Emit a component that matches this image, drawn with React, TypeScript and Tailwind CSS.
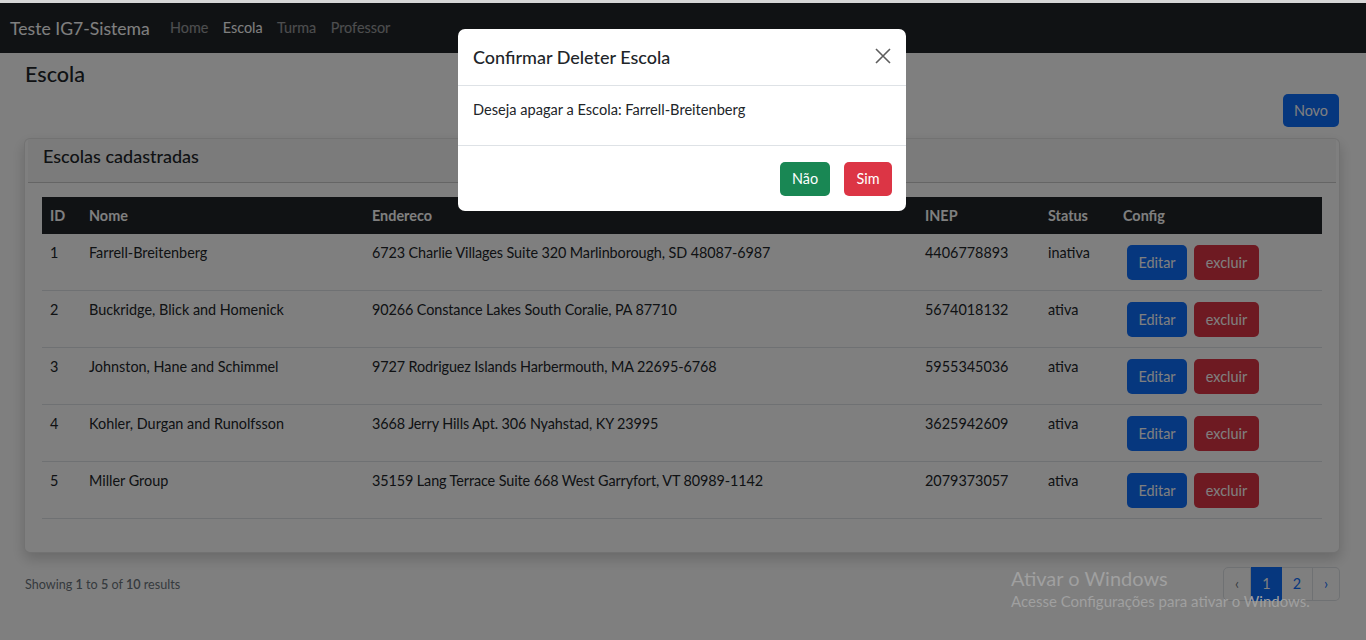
import React from "react";

const rows = [
  { id: 1, nome: "Farrell-Breitenberg", end: "6723 Charlie Villages Suite 320 Marlinborough, SD 48087-6987", inep: "4406778893", status: "inativa" },
  { id: 2, nome: "Buckridge, Blick and Homenick", end: "90266 Constance Lakes South Coralie, PA 87710", inep: "5674018132", status: "ativa" },
  { id: 3, nome: "Johnston, Hane and Schimmel", end: "9727 Rodriguez Islands Harbermouth, MA 22695-6768", inep: "5955345036", status: "ativa" },
  { id: 4, nome: "Kohler, Durgan and Runolfsson", end: "3668 Jerry Hills Apt. 306 Nyahstad, KY 23995", inep: "3625942609", status: "ativa" },
  { id: 5, nome: "Miller Group", end: "35159 Lang Terrace Suite 668 West Garryfort, VT 80989-1142", inep: "2079373057", status: "ativa" },
];

export default function App() {
  return (
    <div className="w-[1366px] h-[640px] overflow-hidden bg-white font-['Lato','Noto_Sans',sans-serif] text-[#212529]">
      <div className="h-[3px] bg-[#d6d6d6]" />
      <div className="relative h-[637px]">
        {/* Navbar */}
        <nav className="h-[50px] bg-[#212529] flex items-center px-[10px]">
          <span className="text-[17.6px] text-white mr-[13px] leading-[27px]">Teste IG7-Sistema</span>
          <a className="px-[7.2px] text-[14.4px] text-white/55">Home</a>
          <a className="px-[7.2px] text-[14.4px] text-white">Escola</a>
          <a className="px-[7.2px] text-[14.4px] text-white/55">Turma</a>
          <a className="px-[7.2px] text-[14.4px] text-white/55">Professor</a>
        </nav>

        {/* Main */}
        <main className="pl-[24px] pr-[26px]">
          <h3 className="mt-[8px] pl-px text-[21.6px] leading-[26px] font-medium">Escola</h3>
          <div className="mt-[7px] flex justify-end">
            <button className="mr-px h-[33px] px-[11px] rounded-[5px] bg-[#0d6efd] text-white text-[14.4px] leading-[21px]">Novo</button>
          </div>

          <div className="mt-[11px] rounded-[6px] bg-white shadow-[0_6px_14px_rgba(0,0,0,0.18)] border border-black/10">
            <div className="mx-[3px] border-b border-black/[0.175] bg-black/[0.03] pl-[15px] pt-[7px] pb-[7px]">
              <h5 className="text-[18px] leading-[21.6px] font-medium mb-[7px]">Escolas cadastradas</h5>
            </div>
            <div className="px-[17px] pt-[14px] pb-[33px]">
              <table className="w-full table-fixed border-collapse text-[14.4px] leading-[21px]">
                <thead>
                  <tr className="bg-[#212529] text-white">
                    <th className="w-[39px] px-2 py-2 text-left font-bold">ID</th>
                    <th className="w-[283px] px-2 py-2 text-left font-bold">Nome</th>
                    <th className="w-[553px] px-2 py-2 text-left font-bold">Endereco</th>
                    <th className="w-[123px] px-2 py-2 text-left font-bold">INEP</th>
                    <th className="w-[75px] px-2 py-2 text-left font-bold">Status</th>
                    <th className="w-[207px] px-2 py-2 text-left font-bold">Config</th>
                  </tr>
                </thead>
                <tbody>
                  {rows.map((r) => (
                    <tr key={r.id} className="border-b border-[#dee2e6] align-top">
                      <td className="px-2 pt-2 pb-[7px]">{r.id}</td>
                      <td className="px-2 pt-2 pb-[7px]">{r.nome}</td>
                      <td className="px-2 pt-2 pb-[7px] tracking-[-0.1px]">{r.end}</td>
                      <td className="px-2 pt-2 pb-[7px]">{r.inep}</td>
                      <td className="px-2 pt-2 pb-[7px]">{r.status}</td>
                      <td className="px-2 pt-2 pb-[7px]">
                        <div className="flex gap-[7px] ml-[4px] my-[3px]">
                          <button className="h-[35px] w-[60px] rounded-[5px] bg-[#0d6efd] text-white">Editar</button>
                          <button className="h-[35px] w-[65px] rounded-[5px] bg-[#dc3545] text-white">excluir</button>
                        </div>
                      </td>
                    </tr>
                  ))}
                </tbody>
              </table>
            </div>
          </div>

          <div className="mt-[14px] flex items-center justify-between">
            <p className="pl-px pt-[3px] text-[12.6px] text-[#6c757d]">
              Showing <span className="font-semibold">1</span> to <span className="font-semibold">5</span> of{" "}
              <span className="font-semibold">10</span> results
            </p>
            <ul className="flex text-[14.4px] leading-[21px]">
              <li className="w-[28px] h-[34px] flex items-center justify-center border border-[#dee2e6] rounded-l-[5px] text-[#6c757d]">‹</li>
              <li className="w-[31px] h-[34px] flex items-center justify-center bg-[#0d6efd] border border-[#0d6efd] text-white">1</li>
              <li className="w-[31px] h-[34px] flex items-center justify-center border border-l-0 border-[#dee2e6] text-[#0d6efd]">2</li>
              <li className="w-[27px] h-[34px] flex items-center justify-center border border-l-0 border-[#dee2e6] rounded-r-[5px] text-[#0d6efd]">›</li>
            </ul>
          </div>
        </main>

        {/* Backdrop */}
        <div className="absolute inset-0 bg-black/50" />

        {/* Modal */}
        <div className="absolute left-[458px] top-[26px] w-[448px] rounded-[7px] bg-white text-[#212529]">
          <div className="h-[57px] flex items-center justify-between pl-[15px] pr-[15px] border-b border-[#dee2e6]">
            <h5 className="text-[18px] leading-[27px] font-medium">Confirmar Deleter Escola</h5>
            <svg width="16" height="16" viewBox="0 0 16 16" className="mt-[-2px]">
              <path d="M1 1 L15 15 M15 1 L1 15" stroke="#5e5e5e" strokeWidth="1.6" fill="none" />
            </svg>
          </div>
          <div className="pl-[15px] pt-[13px] pb-[25px] border-b border-[#dee2e6] text-[14.6px] leading-[21px]">
            Deseja apagar a Escola: Farrell-Breitenberg
          </div>
          <div className="h-[65px] flex items-center justify-end gap-[14px] pr-[14px]">
            <button className="h-[34px] w-[50px] rounded-[5px] bg-[#198754] text-white text-[14.4px]">Não</button>
            <button className="h-[34px] w-[48px] rounded-[5px] bg-[#dc3545] text-white text-[14.4px]">Sim</button>
          </div>
        </div>

        {/* Windows watermark */}
        <div className="absolute left-[1011px] top-[563px] text-[#a0a0a0] pointer-events-none">
          <div className="text-[20px] leading-[24px]">Ativar o Windows</div>
          <div className="text-[15px] leading-[20px] mt-px">Acesse Configurações para ativar o Windows.</div>
        </div>
      </div>
    </div>
  );
}
